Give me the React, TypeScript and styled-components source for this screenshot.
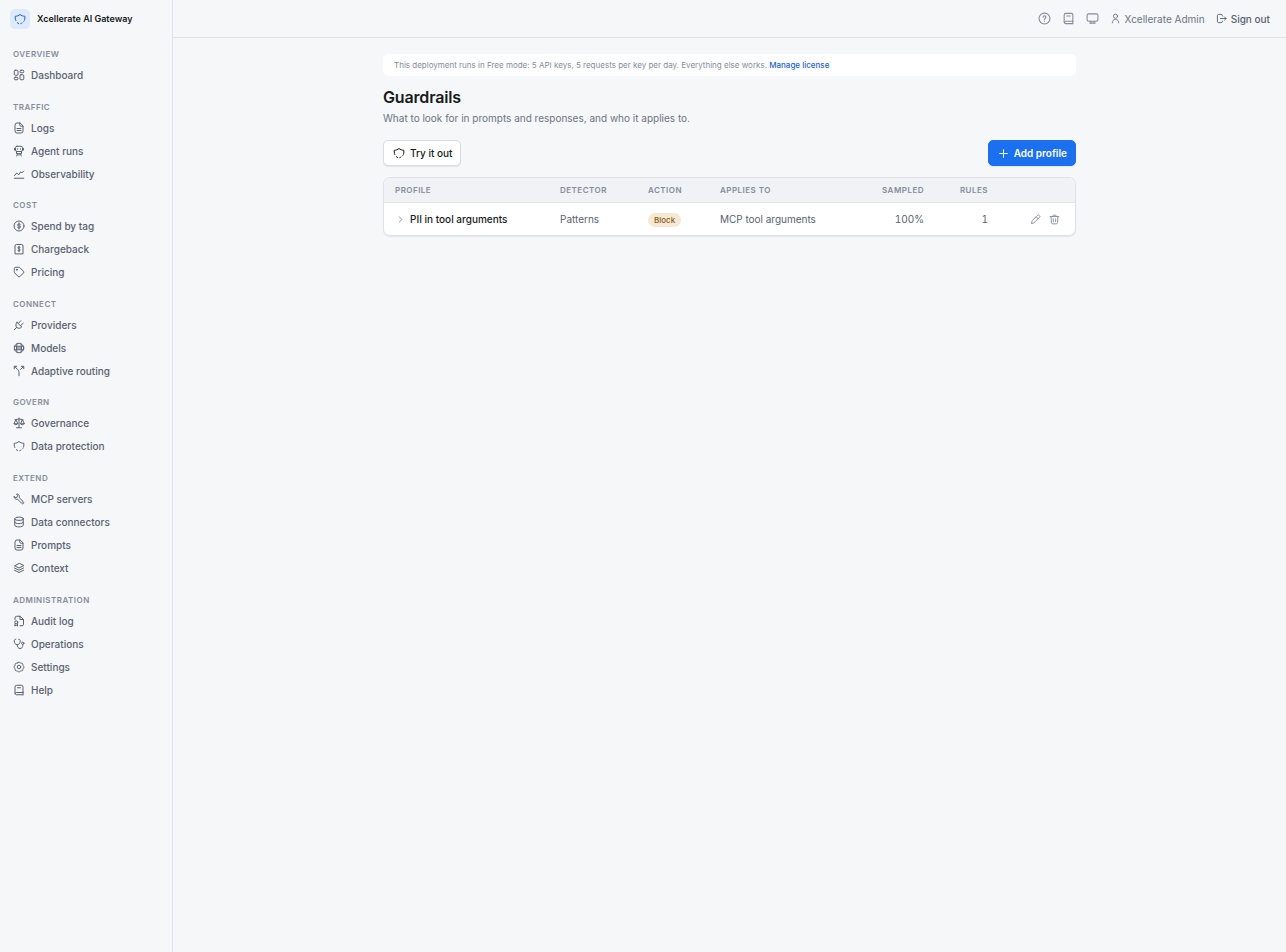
import React from "react";
import styled, { createGlobalStyle, css } from "styled-components";

const color = {
  page: "#f5f7f9",
  surface: "#ffffff",
  head: "#f0f2f5",
  border: "#dfe3e9",
  ink: "#171a21",
  text: "#5a6172",
  muted: "#858c9c",
  link: "#2563c9",
  accent: "#1a70ee",
};

const GlobalStyle = createGlobalStyle`
  *, *::before, *::after { box-sizing: border-box; }
  body {
    margin: 0;
    background: ${color.page};
    color: ${color.text};
    font-family: Inter, "Liberation Sans", sans-serif;
    font-size: 10px;
    line-height: 16px;
  }
`;

/* ---------- icons ---------- */

const icons = {
  shield: (
    <>
      <path d="M21 14.500c.5-1.500.7-3 .7-4.500V6.500C17.500 6.500 14.500 5 12 3 9.500 5 6.500 6.500 2.500 6.500V10c0 2 .4 3.700 1.200 5.200" />
      <path d="M6.500 19.200c.8.8 1.800 1.400 2.900 1.900" />
      <path d="M13.500 21.300c.9-.3 1.800-.8 2.600-1.300" />
      <path d="M19.300 17.600l.2-.3" />
    </>
  ),
  dashboard: (
    <>
      <rect x="2.500" y="2.500" width="7.500" height="10" rx="2" />
      <rect x="14" y="2.500" width="7.500" height="5" rx="2" />
      <rect x="14" y="11.500" width="7.500" height="10" rx="2" />
      <rect x="2.500" y="16.500" width="7.500" height="5" rx="2" />
    </>
  ),
  file: (
    <>
      <path d="M13.500 2H8a4 4 0 0 0-4 4v12a4 4 0 0 0 4 4h8a4 4 0 0 0 4-4V8.500z" />
      <path d="M13.500 2v3.500a3 3 0 0 0 3 3H20M8 13h8M8 17h8" />
    </>
  ),
  robot: (
    <>
      <rect x="5" y="2.500" width="14" height="10.500" rx="3" />
      <path d="M9 7.500v1M15 7.500v1M3 7v3M21 7v3M7 13v4.500h10V13M9 17.500L7.500 22M15 17.500l1.500 4.500M12 17.500v3" />
    </>
  ),
  chart: <path d="M2.500 20.500h19M3 15l4.500-5 4 3.500 4-6 2 2.500L21.500 6" />,
  coin: (
    <>
      <circle cx="12" cy="12" r="10" />
      <path d="M15 9.500C14.700 8.300 13.500 8 12 8s-3 .5-3 2 1.500 1.800 3 2 3 .5 3 2-1.500 2-3 2-2.800-.4-3-1.600M12 6v12" />
    </>
  ),
  invoice: (
    <>
      <path d="M4 21V6a3 3 0 0 1 3-3h10a3 3 0 0 1 3 3v15z" />
      <path d="M14.300 9c-.4-.7-1.200-1-2.300-1-1.400 0-2.400.6-2.400 1.800 0 2.600 4.800 1.400 4.800 4.200 0 1.200-1 1.900-2.400 1.900-1.200 0-2-.4-2.400-1.100M12 6.500v11" />
    </>
  ),
  tag: (
    <>
      <path d="M2.500 8V5.500a3 3 0 0 1 3-3h6c1 0 1.800.4 2.500 1.100l6.900 6.900a2.500 2.500 0 0 1 0 3.500l-7 7a2.500 2.500 0 0 1-3.500 0L3.600 14A4 4 0 0 1 2.500 11.500z" />
      <circle cx="7.500" cy="7.500" r="1" />
    </>
  ),
  plug: (
    <>
      <path d="M8 6.500l9.500 9.500c-2.800 2.800-7.200 3.600-10 .9s-1.900-7.200.5-10.400zM7.500 16.500L2.500 21.500" />
      <path d="M11 8.500l4.500-5M15.500 13l5-4.500" />
    </>
  ),
  models: (
    <>
      <circle cx="12" cy="12" r="9.500" />
      <path d="M2.500 8.500h19M2.500 15.500h19M8 3.500c-1.300 5-1.300 12 0 17M16 3.500c1.300 5 1.300 12 0 17M8 12h8" />
    </>
  ),
  split: (
    <path d="M2.500 7.500v-5h5M16.500 2.500h5v5M3 3l6.500 6c1.700 1.700 2.500 3.200 2.500 5.500v7M21 3l-6 6" />
  ),
  scale: (
    <path d="M12 2v19M7 21.500h10M4 5.500c4 0 5-1.500 8-1.500s4 1.500 8 1.500M5.500 6L2 13.500h7zM18.500 6L15 13.500h7zM2 13.500c.5 3 6.500 3 7 0M15 13.500c.5 3 6.500 3 7 0" />
  ),
  wrench: (
    <>
      <path d="M12.500 8.500c.6-2.600-.2-5-2.600-6.100-.8-.4-1.900-.5-2.700-.3l2 3.200-1.400 3.400-3.600.3-1.900-3c-.6 2.400.4 5 2.900 6.100 1.300.6 2.600.6 3.800.1l8.500 8.600a2.300 2.300 0 0 0 3.300-3.300z" />
      <path d="M18.300 18.300h.1" />
    </>
  ),
  database: (
    <>
      <ellipse cx="12" cy="5.500" rx="8.500" ry="3.300" />
      <path d="M3.500 5.500v13c0 1.800 3.800 3.300 8.500 3.300s8.500-1.500 8.500-3.300v-13M3.500 12c0 1.800 3.800 3.300 8.500 3.300s8.500-1.500 8.500-3.300" />
    </>
  ),
  layers: (
    <path d="M12 3L3 7.500l9 4.500 9-4.500zM3 12l9 4.500 9-4.500M3 16.500L12 21l9-4.500" />
  ),
  audit: (
    <>
      <path d="M4 9V6a3.500 3.500 0 0 1 3.500-3.500H14L21 9v9.500a3 3 0 0 1-3 3h-4" />
      <path d="M14 2.500V9h7" />
      <circle cx="6.500" cy="14.500" r="3" />
      <path d="M4.500 17l-1 5 3-1.500 3 1.500-1-5" />
    </>
  ),
  stethoscope: (
    <>
      <path d="M5.500 2.500C3.500 2.500 2.500 3.500 2.500 6c0 4 2.500 7.500 6 7.500S14.500 10 14.500 6c0-2.500-1-3.500-3-3.500M8.500 13.500c0 4.500 2 7.500 5.500 7.500s5.500-2.500 5.500-6v-2" />
      <circle cx="19.500" cy="10.500" r="2.300" />
    </>
  ),
  settings: (
    <>
      <path d="M9.500 3.500c1.600-1.700 3.400-1.700 5 0 .6.600 1.300.9 2.200.8 2.200 0 3.200 1.200 3.100 3.100 0 .9.200 1.600.8 2.200 1.500 1.600 1.500 3.400 0 5-.6.600-.8 1.300-.8 2.100.1 2-1.100 3.200-3.100 3.100-.9 0-1.600.2-2.200.8-1.600 1.500-3.400 1.500-5 0-.6-.6-1.300-.8-2.200-.8-2 .1-3.200-1.100-3.100-3.100 0-.8-.2-1.500-.8-2.100-1.500-1.600-1.500-3.400 0-5 .6-.6.800-1.300.8-2.200-.1-1.900 1-3.100 3.100-3.100.9.100 1.600-.2 2.200-.8z" />
      <circle cx="12" cy="12" r="3.500" />
    </>
  ),
  book: (
    <>
      <path d="M20 17V5.500a3 3 0 0 0-3-3H7.500A3.500 3.500 0 0 0 4 6v13.500" />
      <path d="M20 17H6.500a2.300 2.300 0 0 0 0 4.500H20M20 17v4.500M9 7.500h6" />
    </>
  ),
  help: (
    <>
      <circle cx="12" cy="12" r="10" />
      <path d="M9.500 9.500a2.500 2.500 0 1 1 4 2c-.9.600-1.500 1.200-1.500 2.200M12 16.800v.2" />
    </>
  ),
  monitor: (
    <>
      <rect x="2" y="3.500" width="20" height="13.500" rx="3" />
      <path d="M9 17v3.500M15 17v3.500M7 20.500h10" />
    </>
  ),
  user: (
    <>
      <circle cx="12" cy="7" r="4.500" />
      <path d="M5 21.500c0-4.500 2.500-7.500 7-7.500s7 3 7 7.500" />
    </>
  ),
  signOut: (
    <>
      <path d="M14 6.500V6a3 3 0 0 0-3-3H6a3 3 0 0 0-3 3v12a3 3 0 0 0 3 3h5a3 3 0 0 0 3-3v-.5" />
      <path d="M9.500 12H22M18.500 8.500L22 12l-3.500 3.500" />
    </>
  ),
  plus: <path d="M12 3.500v17M3.500 12h17" />,
  chevron: <path d="M9 6l6 6-6 6" />,
  pencil: (
    <path d="M14.500 5L17 2.900c1-.9 2.300-.8 3.200.1l.8.800c.9.900 1 2.200.1 3.200L8.500 19.500 3 21l1.500-5.500zM13.500 6l4.500 4.500" />
  ),
  trash: (
    <path d="M2.500 5.500h19M19.500 5.500l-.8 13a3 3 0 0 1-3 3H8.300a3 3 0 0 1-3-3l-.8-13M8 5.500L9.500 2.500h5L16 5.500M9.500 10.500v6.500M14.500 10.500v6.500" />
  ),
};

type IconName = keyof typeof icons;

const Svg = styled.svg<{ $size: number }>`
  flex: none;
  width: ${(p) => p.$size}px;
  height: ${(p) => p.$size}px;
  fill: none;
  stroke: currentColor;
  stroke-width: 2;
  stroke-linecap: round;
  stroke-linejoin: round;
`;

const Icon = ({ name, size = 11 }: { name: IconName; size?: number }) => (
  <Svg $size={size} viewBox="0 0 24 24" aria-hidden="true">
    {icons[name]}
  </Svg>
);

/* ---------- shell ---------- */

const Shell = styled.div`
  display: flex;
  min-height: 100vh;
`;

const Sidebar = styled.aside`
  flex: none;
  width: 173px;
  border-right: 1px solid ${color.border};
`;

const Brand = styled.div`
  display: flex;
  align-items: center;
  gap: 7px;
  height: 38px;
  padding-left: 10px;
  color: ${color.ink};
  font-size: 9px;
  font-weight: 600;
`;

const BrandMark = styled.span`
  display: grid;
  place-items: center;
  width: 20px;
  height: 20px;
  border-radius: 5px;
  background: #dceafc;
  color: ${color.link};
`;

const Nav = styled.nav`
  display: flex;
  flex-direction: column;
  gap: 15px;
  padding: 11px 8px;
`;

const NavHeading = styled.h2`
  margin: 0 0 3px;
  padding-left: 5px;
  color: ${color.muted};
  font-size: 8px;
  font-weight: 600;
  line-height: 1.45;
  letter-spacing: 0.06em;
  text-transform: uppercase;
`;

const NavList = styled.ul`
  margin: 0;
  padding: 0;
  list-style: none;
`;

const NavLink = styled.a`
  display: flex;
  align-items: center;
  gap: 6px;
  height: 23px;
  padding-left: 5px;
  color: ${color.text};
  font-weight: 500;
  text-decoration: none;
`;

const Column = styled.div`
  flex: 1;
  min-width: 0;
`;

const TopBar = styled.header`
  display: flex;
  align-items: center;
  justify-content: flex-end;
  gap: 11px;
  height: 38px;
  padding-right: 16px;
  border-bottom: 1px solid ${color.border};
`;

const bareButton = css`
  display: inline-flex;
  align-items: center;
  padding: 0;
  border: 0;
  background: none;
  font: inherit;
  cursor: pointer;
`;

const IconButton = styled.button`
  ${bareButton}
  color: ${color.muted};
`;

const Account = styled.span`
  display: flex;
  align-items: center;
  gap: 4px;
  color: #6d7484;
`;

const SignOut = styled.button`
  ${bareButton}
  gap: 4px;
  color: ${color.text};
  font-weight: 500;
`;

/* ---------- page ---------- */

const Main = styled.main`
  max-width: 725px;
  margin: 0 auto;
  padding: 16px;
`;

const Banner = styled.p`
  margin: 0;
  padding: 3px 11px;
  border-radius: 5px;
  background: ${color.surface};
  color: ${color.muted};
  font-size: 8px;

  a {
    color: ${color.link};
    font-weight: 500;
    text-decoration: none;
  }
`;

const Title = styled.h1`
  margin: 10px 0 0;
  color: ${color.ink};
  font-size: 16px;
  font-weight: 600;
  line-height: 22px;
  letter-spacing: -0.01em;
`;

const Subtitle = styled.p`
  margin: 2px 0 0;
  color: #6d7484;
`;

const Toolbar = styled.div`
  display: flex;
  justify-content: space-between;
  margin: 14px 0 11px;
`;

const Button = styled.button<{ $primary?: boolean }>`
  display: inline-flex;
  align-items: center;
  gap: 5px;
  height: 26px;
  padding: 0 8px 0 9px;
  border: 1px solid ${(p) => (p.$primary ? color.accent : "#d8dce4")};
  border-radius: 5px;
  background: ${(p) => (p.$primary ? color.accent : color.surface)};
  box-shadow: 0 1px 1px rgba(20, 30, 50, 0.08);
  color: ${(p) => (p.$primary ? "#ffffff" : color.ink)};
  font: inherit;
  font-weight: ${(p) => (p.$primary ? 600 : 500)};
  cursor: pointer;
`;

const Card = styled.div`
  overflow: hidden;
  border: 1px solid ${color.border};
  border-radius: 7px;
  background: ${color.surface};
  box-shadow: 0 1px 1px rgba(20, 30, 50, 0.08);
`;

const Table = styled.table`
  width: 100%;
  border-collapse: separate;
  border-spacing: 0;
  table-layout: fixed;
`;

const HeadCell = styled.th<{ $width?: number; $end?: boolean }>`
  width: ${(p) => (p.$width ? `${p.$width}px` : "auto")};
  height: 25px;
  padding: 0 11px;
  border-bottom: 1px solid ${color.border};
  background: ${color.head};
  color: ${color.muted};
  font-size: 8px;
  font-weight: 600;
  letter-spacing: 0.06em;
  text-align: ${(p) => (p.$end ? "right" : "left")};
  text-transform: uppercase;
`;

const Cell = styled.td<{ $end?: boolean }>`
  height: 32px;
  padding: 0 11px;
  text-align: ${(p) => (p.$end ? "right" : "left")};
  font-variant-numeric: tabular-nums;
  white-space: nowrap;
`;

const ProfileToggle = styled.button`
  ${bareButton}
  display: flex;
  gap: 4px;
  color: ${color.ink};
  font-weight: 500;

  svg {
    color: ${color.muted};
  }
`;

const Badge = styled.span`
  display: inline-block;
  padding: 0 6px;
  border-radius: 7px;
  background: #f6e8d2;
  color: #8a5a1c;
  font-size: 8px;
  font-weight: 500;
  line-height: 14px;
  vertical-align: middle;
`;

const Actions = styled.div`
  display: flex;
  justify-content: flex-end;
  gap: 8px;
  padding-right: 4px;
`;

const groups: { title: string; items: [IconName, string][] }[] = [
  { title: "Overview", items: [["dashboard", "Dashboard"]] },
  {
    title: "Traffic",
    items: [
      ["file", "Logs"],
      ["robot", "Agent runs"],
      ["chart", "Observability"],
    ],
  },
  {
    title: "Cost",
    items: [
      ["coin", "Spend by tag"],
      ["invoice", "Chargeback"],
      ["tag", "Pricing"],
    ],
  },
  {
    title: "Connect",
    items: [
      ["plug", "Providers"],
      ["models", "Models"],
      ["split", "Adaptive routing"],
    ],
  },
  {
    title: "Govern",
    items: [
      ["scale", "Governance"],
      ["shield", "Data protection"],
    ],
  },
  {
    title: "Extend",
    items: [
      ["wrench", "MCP servers"],
      ["database", "Data connectors"],
      ["file", "Prompts"],
      ["layers", "Context"],
    ],
  },
  {
    title: "Administration",
    items: [
      ["audit", "Audit log"],
      ["stethoscope", "Operations"],
      ["settings", "Settings"],
      ["book", "Help"],
    ],
  },
];

export default function App() {
  return (
    <>
      <GlobalStyle />
      <Shell>
        <Sidebar>
          <Brand>
            <BrandMark>
              <Icon name="shield" size={12} />
            </BrandMark>
            Xcellerate AI Gateway
          </Brand>
          <Nav>
            {groups.map((group) => (
              <section key={group.title}>
                <NavHeading>{group.title}</NavHeading>
                <NavList>
                  {group.items.map(([icon, label]) => (
                    <li key={label}>
                      <NavLink href="#">
                        <Icon name={icon} size={12} />
                        {label}
                      </NavLink>
                    </li>
                  ))}
                </NavList>
              </section>
            ))}
          </Nav>
        </Sidebar>
        <Column>
          <TopBar>
            <IconButton aria-label="Help">
              <Icon name="help" size={13} />
            </IconButton>
            <IconButton aria-label="Documentation">
              <Icon name="book" size={13} />
            </IconButton>
            <IconButton aria-label="Theme">
              <Icon name="monitor" size={13} />
            </IconButton>
            <Account>
              <Icon name="user" />
              Xcellerate Admin
            </Account>
            <SignOut>
              <Icon name="signOut" />
              Sign out
            </SignOut>
          </TopBar>
          <Main>
            <Banner>
              This deployment runs in Free mode: 5 API keys, 5 requests per key per day. Everything else works.{" "}
              <a href="#">Manage license</a>
            </Banner>
            <Title>Guardrails</Title>
            <Subtitle>What to look for in prompts and responses, and who it applies to.</Subtitle>
            <Toolbar>
              <Button>
                <Icon name="shield" size={12} />
                Try it out
              </Button>
              <Button $primary>
                <Icon name="plus" />
                Add profile
              </Button>
            </Toolbar>
            <Card>
              <Table>
                <thead>
                  <tr>
                    <HeadCell $width={165}>Profile</HeadCell>
                    <HeadCell $width={88}>Detector</HeadCell>
                    <HeadCell $width={72}>Action</HeadCell>
                    <HeadCell>Applies to</HeadCell>
                    <HeadCell $width={80} $end>Sampled</HeadCell>
                    <HeadCell $width={64} $end>Rules</HeadCell>
                    <HeadCell $width={76} aria-label="Actions" />
                  </tr>
                </thead>
                <tbody>
                  <tr>
                    <Cell>
                      <ProfileToggle aria-expanded="false">
                        <Icon name="chevron" />
                        PII in tool arguments
                      </ProfileToggle>
                    </Cell>
                    <Cell>Patterns</Cell>
                    <Cell>
                      <Badge>Block</Badge>
                    </Cell>
                    <Cell>MCP tool arguments</Cell>
                    <Cell $end>100%</Cell>
                    <Cell $end>1</Cell>
                    <Cell>
                      <Actions>
                        <IconButton aria-label="Edit profile">
                          <Icon name="pencil" />
                        </IconButton>
                        <IconButton aria-label="Delete profile">
                          <Icon name="trash" />
                        </IconButton>
                      </Actions>
                    </Cell>
                  </tr>
                </tbody>
              </Table>
            </Card>
          </Main>
        </Column>
      </Shell>
    </>
  );
}
